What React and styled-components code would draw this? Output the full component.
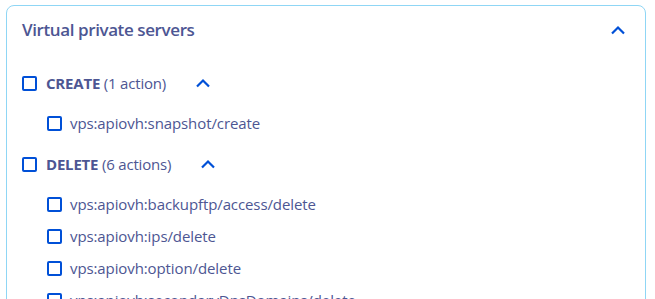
import React from "react";
import styled, { createGlobalStyle } from "styled-components";

const GlobalStyle = createGlobalStyle`
  body {
    margin: 0;
    background: #ffffff;
    font-family: "Source Sans Pro", "Open Sans", "Liberation Sans", sans-serif;
    color: #4d5693;
  }
`;

const Page = styled.div`
  padding: 5px 9px 0 6px;
  height: 299px;
  overflow: hidden;
  box-sizing: border-box;
`;

const Card = styled.div`
  border: 1px solid #8fd6f5;
  border-radius: 8px;
  padding: 0 16px 16px 15px;
  min-height: 400px;
`;

const Header = styled.div`
  display: flex;
  align-items: center;
  justify-content: space-between;
  height: 48px;
  padding-right: 3px;
`;

const Title = styled.h2`
  margin: 0;
  font-size: 17px;
  font-weight: 600;
  line-height: 24px;
  letter-spacing: -0.4px;
  color: #4d5693;
`;

const Groups = styled.div`
  margin-top: 13px;
`;

const Group = styled.div`
  margin-bottom: 9px;
`;

const Row = styled.label`
  display: flex;
  align-items: center;
  height: 32px;
  gap: ${(p) => (p.$sub ? "8px" : "9px")};
  font-size: 15px;
  color: #4d5693;
  letter-spacing: ${(p) => (p.$sub ? "-0.1px" : "-0.2px")};
`;

const Box = styled.span`
  width: 15px;
  height: 15px;
  box-sizing: border-box;
  border: 2px solid #0050d7;
  border-radius: 2px;
  flex-shrink: 0;
`;

const Name = styled.span`
  font-weight: 700;
`;

const Count = styled.span`
  font-weight: 400;
`;

const Toggle = styled.span`
  display: flex;
  margin-left: 20px;
`;

const SubList = styled.div`
  padding: 8px 0 0 25px;
`;

const Chevron = () => (
  <svg width="16" height="10" viewBox="0 0 16 10">
    <path d="M2 8.5 L8 2.5 L14 8.5" fill="none" stroke="#0050d7" strokeWidth="2.2" />
  </svg>
);

const groups = [
  { name: "CREATE", count: "(1 action)", items: ["vps:apiovh:snapshot/create"] },
  {
    name: "DELETE",
    count: "(6 actions)",
    items: [
      "vps:apiovh:backupftp/access/delete",
      "vps:apiovh:ips/delete",
      "vps:apiovh:option/delete",
      "vps:apiovh:secondaryDnsDomains/delete",
      "vps:apiovh:snapshot/delete",
      "vps:apiovh:delete",
    ],
  },
];

const App = () => {
  return (
    <Page>
      <GlobalStyle />
      <Card>
        <Header>
          <Title>Virtual private servers</Title>
          <Chevron />
        </Header>
        <Groups>
          {groups.map((g) => (
            <Group key={g.name}>
              <Row>
                <Box />
                <span>
                  <Name>{g.name}</Name> <Count>{g.count}</Count>
                </span>
                <Toggle>
                  <Chevron />
                </Toggle>
              </Row>
              <SubList>
                {g.items.map((item) => (
                  <Row $sub key={item}>
                    <Box />
                    <span>{item}</span>
                  </Row>
                ))}
              </SubList>
            </Group>
          ))}
        </Groups>
      </Card>
    </Page>
  );
};

export default App;
